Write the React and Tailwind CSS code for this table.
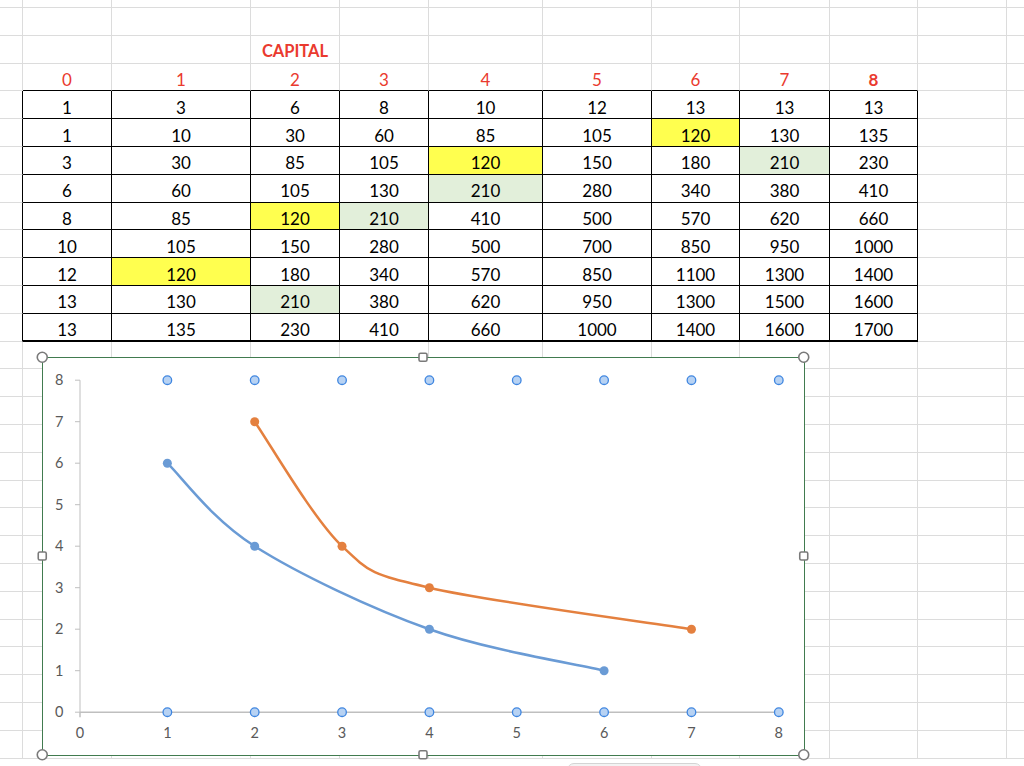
import React from 'react'

const HEADERS = ['0', '1', '2', '3', '4', '5', '6', '7', '8']

const DATA = [
  [1, 3, 6, 8, 10, 12, 13, 13, 13],
  [1, 10, 30, 60, 85, 105, 120, 130, 135],
  [3, 30, 85, 105, 120, 150, 180, 210, 230],
  [6, 60, 105, 130, 210, 280, 340, 380, 410],
  [8, 85, 120, 210, 410, 500, 570, 620, 660],
  [10, 105, 150, 280, 500, 700, 850, 950, 1000],
  [12, 120, 180, 340, 570, 850, 1100, 1300, 1400],
  [13, 130, 210, 380, 620, 950, 1300, 1500, 1600],
  [13, 135, 230, 410, 660, 1000, 1400, 1600, 1700],
]

// [row, col] within DATA
const YELLOW = ['1-6', '2-4', '4-2', '6-1']
const GREEN = ['2-7', '3-4', '4-3', '7-2']

const ROW_COUNT = 28
const COL_COUNT = 12
const TABLE_TOP = 4 // sheet row of first data row

function cellClass(r, c) {
  const inTable = r >= TABLE_TOP && r < TABLE_TOP + DATA.length && c >= 1 && c <= 9
  const key = `${r - TABLE_TOP}-${c - 1}`
  let cls = 'flex items-center justify-center pt-[5px] '
  if (inTable) {
    cls += r === TABLE_TOP + DATA.length - 1 ? 'border-r border-b-2 border-black ' : 'border-r border-b border-black '
    if (YELLOW.includes(key)) cls += 'bg-[#ffff4f] '
    else if (GREEN.includes(key)) cls += 'bg-[#e2efda] '
    return cls
  }
  const leftOfTable = c === 0 && r >= TABLE_TOP && r < TABLE_TOP + DATA.length
  const aboveTable = r === TABLE_TOP - 1 && c >= 1 && c <= 9
  if (c === COL_COUNT - 1) {
    cls += 'border-b border-[#dcdcdc] '
  } else if (leftOfTable) {
    cls += 'border-r border-r-black border-b border-b-[#dcdcdc] '
  } else if (aboveTable) {
    cls += 'border-b border-b-black border-r border-r-[#dcdcdc] '
  } else {
    cls += 'border-r border-b border-[#dcdcdc] '
  }
  return cls
}

function cellContent(r, c) {
  if (r === 2 && c === 3) {
    return <span className="font-bold text-[16.5px] text-[#ea3a2e]">CAPITAL</span>
  }
  if (r === 3 && c >= 1 && c <= 9) {
    return (
      <span className={c === 9 ? 'font-bold text-[#ea3a2e]' : 'text-[#ea3a2e]'}>{HEADERS[c - 1]}</span>
    )
  }
  if (r >= TABLE_TOP && r < TABLE_TOP + DATA.length && c >= 1 && c <= 9) {
    return <span className="text-black">{DATA[r - TABLE_TOP][c - 1]}</span>
  }
  return null
}

const X = (v) => 80.5 + 87.35 * v
const Y = (v) => 712.7 - 41.5 * v

function smoothPath(pts) {
  const p = pts.map(([a, b]) => [X(a), Y(b)])
  let d = `M${p[0][0]},${p[0][1]}`
  for (let i = 0; i < p.length - 1; i++) {
    const p0 = p[i - 1] || p[i]
    const p1 = p[i]
    const p2 = p[i + 1]
    const p3 = p[i + 2] || p2
    const c1 = [p1[0] + (p2[0] - p0[0]) / 6, p1[1] + (p2[1] - p0[1]) / 6]
    const c2 = [p2[0] - (p3[0] - p1[0]) / 6, p2[1] - (p3[1] - p1[1]) / 6]
    d += ` C${c1[0]},${c1[1]} ${c2[0]},${c2[1]} ${p2[0]},${p2[1]}`
  }
  return d
}

const BLUE = [[1, 6], [2, 4], [4, 2], [6, 1]]
const ORANGE = [[2, 7], [3, 4], [4, 3], [7, 2]]
const TICKS = [0, 1, 2, 3, 4, 5, 6, 7, 8]

function Chart() {
  return (
    <div className="absolute left-[42px] top-[357px] w-[763px] h-[399px] border-[1.5px] border-[#417b4f] bg-white">
      <svg
        className="absolute inset-0 overflow-visible"
        width="760"
        height="396"
        viewBox="43.5 358.5 760 396"
        style={{ fontFamily: 'Lato, "Liberation Sans", sans-serif' }}
      >
        {/* y axis */}
        <line x1={X(0)} y1={Y(8)} x2={X(0)} y2={Y(0) + 5} stroke="#bfbfbf" strokeWidth="1" />
        {TICKS.map((t) => (
          <g key={`y${t}`}>
            <line x1={X(0) - 5} y1={Y(t)} x2={X(0)} y2={Y(t)} stroke="#bfbfbf" strokeWidth="1" />
            <text x="64" y={Y(t) + 5} textAnchor="end" fontSize="14.5" fill="#595959">
              {t}
            </text>
          </g>
        ))}
        {/* x axis */}
        <line x1={X(0)} y1={Y(0)} x2={X(8)} y2={Y(0)} stroke="#bfbfbf" strokeWidth="1.5" />
        {TICKS.map((t) => (
          <g key={`x${t}`}>
            <line x1={X(t)} y1={Y(0)} x2={X(t)} y2={Y(0) + 5} stroke="#bfbfbf" strokeWidth="1" />
            <text x={X(t)} y="738.5" textAnchor="middle" fontSize="14.5" fill="#595959">
              {t}
            </text>
          </g>
        ))}

        <path d={smoothPath(BLUE)} fill="none" stroke="#6a9bd5" strokeWidth="2.5" />
        <path d={smoothPath(ORANGE)} fill="none" stroke="#e4803f" strokeWidth="2.5" />
        {BLUE.map(([a, b]) => (
          <circle key={`b${a}`} cx={X(a)} cy={Y(b)} r="4.5" fill="#6a9bd5" />
        ))}
        {ORANGE.map(([a, b]) => (
          <circle key={`o${a}`} cx={X(a)} cy={Y(b)} r="4.5" fill="#e4803f" />
        ))}

        {/* selection markers */}
        {TICKS.slice(1).map((t) => (
          <g key={`s${t}`}>
            <circle cx={X(t)} cy={Y(8)} r="4.3" fill="#b7d2f3" stroke="#3f86e0" strokeWidth="1.3" />
            <circle cx={X(t)} cy={Y(0)} r="4.3" fill="#b7d2f3" stroke="#3f86e0" strokeWidth="1.3" />
          </g>
        ))}

        {/* resize handles */}
        {[
          [42.75, 357.75],
          [804.25, 357.75],
          [42.75, 755.25],
          [804.25, 755.25],
        ].map(([cx, cy]) => (
          <circle key={`h${cx}-${cy}`} cx={cx} cy={cy} r="5" fill="#ffffff" stroke="#7a7a7a" strokeWidth="1.6" />
        ))}
        {[
          [423.5, 357.75],
          [42.75, 556.5],
          [804.25, 556.5],
          [423.5, 755.25],
        ].map(([cx, cy]) => (
          <rect
            key={`q${cx}-${cy}`}
            x={cx - 4}
            y={cy - 4}
            width="8"
            height="8"
            rx="1.5"
            fill="#ffffff"
            stroke="#7a7a7a"
            strokeWidth="1.6"
          />
        ))}
      </svg>
    </div>
  )
}

export default function App() {
  const rows = Array.from({ length: ROW_COUNT }, (_, i) => i)
  const cols = Array.from({ length: COL_COUNT }, (_, i) => i)
  return (
    <div
      className="relative w-[1024px] h-[766px] overflow-hidden bg-white text-[17px] leading-none"
      style={{ fontFamily: 'Lato, "Liberation Sans", sans-serif' }}
    >
      <div className="grid grid-cols-[23px_89px_139px_89px_89px_114px_109px_88px_90px_88px_89px_17px] grid-rows-[8px_repeat(27,27.8px)]">
        {rows.map((r) =>
          cols.map((c) => (
            <div key={`${r}-${c}`} className={cellClass(r, c)}>
              {cellContent(r, c)}
            </div>
          ))
        )}
      </div>

      <Chart />

      <div className="absolute left-[567px] top-[763px] w-[135px] h-[12px] rounded-t-[7px] border border-[#d4d4d4] bg-[#f3f3f3]" />
    </div>
  )
}
